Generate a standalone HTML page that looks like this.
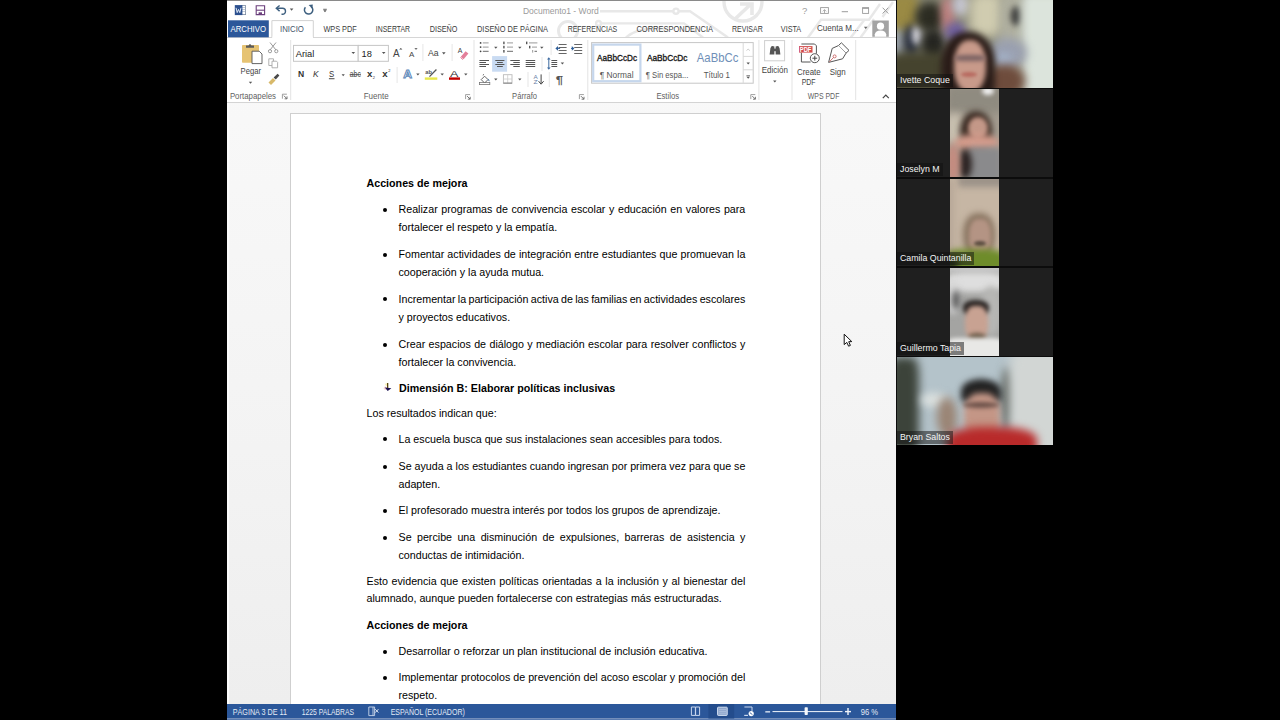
<!DOCTYPE html>
<html><head><meta charset="utf-8">
<style>
*{margin:0;padding:0;box-sizing:border-box}
html,body{width:1280px;height:720px;overflow:hidden;background:#000}
body{position:relative;font-family:"Liberation Sans",sans-serif}
.a{position:absolute}
.l{position:absolute;font-size:10.7px;line-height:14px;white-space:nowrap;color:#000}
.b{font-weight:bold}
.jf{display:flex;justify-content:space-between}
.dot{position:absolute;width:4px;height:4px;border-radius:50%;background:#000}
.lbl{position:absolute;color:#f4f4f4;font-size:8.8px;line-height:13px;height:13px;white-space:nowrap;padding:0 3px 0 3px;background:rgba(16,16,16,.5)}
</style></head>
<body>
<div class="a" style="left:227px;top:0;width:669px;height:720px;background:linear-gradient(#fafafa 0px,#f8f8f8 120px,#f3f3f3 450px,#eeeeee 704px)"></div>
<div class="a" style="left:227px;top:103px;width:1.5px;height:601px;background:#fcfcfc"></div>
<div class="a" style="left:227px;top:0;width:669px;height:37px;background:#fff"></div>
<div class="a" style="left:227px;top:0;width:669px;height:1px;background:#8a8a8a"></div>
<div class="a" style="left:227px;top:37px;width:669px;height:66px;background:#fff;border-bottom:1px solid #d4d4d4"></div>
<div class="a" style="left:290px;top:113px;width:531px;height:600px;background:#fff;border:1px solid #cfcfcf"></div>
<svg class="a" style="left:0;top:700px" width="1280" height="20" viewBox="0 700 1280 20" font-family="Liberation Sans, sans-serif">
<rect x="227" y="704" width="669" height="14.5" fill="#2b579a"/><rect x="227" y="718.5" width="669" height="1.5" fill="#5a7bb0"/>
<text x="232.7" y="714.6" font-size="8.4" fill="#e4ebf5" textLength="54.3" lengthAdjust="spacingAndGlyphs">PÁGINA 3 DE 11</text>
<text x="301.8" y="714.6" font-size="8.4" fill="#e4ebf5" textLength="52.2" lengthAdjust="spacingAndGlyphs">1225 PALABRAS</text>
<path d="M368.8 707 H373 V715.6 H368.8 Z M373 707 H374.6 V715.6 H373" fill="none" stroke="#c8d6ea" stroke-width=".9"/><path d="M375.2 709.2 L378.4 712.6 M378.4 709.2 L375.2 712.6" stroke="#e0e8f4" stroke-width="1"/>
<text x="390.7" y="714.6" font-size="8.4" fill="#e4ebf5" textLength="74.1" lengthAdjust="spacingAndGlyphs">ESPAÑOL (ECUADOR)</text>
<rect x="708.4" y="704" width="25.8" height="14.5" fill="#234c8c"/>
<path d="M691.4 707 H695.4 V715.4 H691.4 Z M695.6 707 H699.6 V715.4 H695.6 Z" fill="none" stroke="#c9d7ee" stroke-width="1"/>
<rect x="717.6" y="707.2" width="9.6" height="8.2" rx=".6" fill="#8ea6cc" stroke="#d4e0f2" stroke-width="1"/><path d="M719 709.6H726M719 711.4H726M719 713.2H726" stroke="#b8c8e2" stroke-width=".7"/>
<path d="M744.4 707 H752 V711 M748 715.4 H744.4 Z" fill="none" stroke="#c9d7ee" stroke-width="1"/><circle cx="751.2" cy="713.6" r="2.6" fill="#fff"/><path d="M749.8 712.6 L752.4 714.6" stroke="#2b579a" stroke-width=".9"/>
<rect x="765.3" y="711.2" width="4.8" height="1.3" fill="#e8eef8"/>
<rect x="772.5" y="711" width="70" height="1.1" fill="#dfe7f3"/>
<rect x="804.6" y="707.3" width="3.2" height="7.8" rx=".8" fill="#f4f7fb"/>
<rect x="845" y="710.9" width="6" height="1.4" fill="#f0f4fa"/><rect x="847.3" y="708" width="1.4" height="7" fill="#f0f4fa"/>
<text x="860.7" y="714.6" font-size="8.8" fill="#e4ebf5" textLength="17.3" lengthAdjust="spacingAndGlyphs">96 %</text>
</svg>
<svg class="a" style="left:0;top:0" width="1280" height="110" viewBox="0 0 1280 110" font-family="Liberation Sans, sans-serif">
<clipPath id="tb"><rect x="227" y="1" width="669" height="36"/></clipPath>
<g fill="none" stroke="#e8e8e8" stroke-width="2.4" clip-path="url(#tb)"><path d="M600 11.2H673.4"/><circle cx="676" cy="11.2" r="2.6"/><path d="M678.6 11.2H690 L728 37.5"/><path d="M601 23.4H684 L703 37.5"/><circle cx="598.5" cy="23.4" r="2.4"/><path d="M626 37.5 Q636 29 650 29 H668"/><circle cx="743" cy="2" r="19" stroke-width="3.4"/><path d="M735 19 L751 4 M740 4 H752 V15" stroke-width="3.6"/><circle cx="568" cy="31" r="9.5" stroke-width="3"/><path d="M808 37.5 L821 19.7 H869 L880 4 M850.8 37.5 L865 19 M860.6 37.5 L874 19 M882.5 17 L893 2"/></g>
<text x="522.9" y="14.3" font-size="9" fill="#9a9a9a" textLength="75.8" lengthAdjust="spacingAndGlyphs" >Documento1 - Word</text>
<rect x="241" y="5.6" width="4.6" height="9" fill="#fff" stroke="#7a8aa0" stroke-width=".8"/><path d="M242 7.5h3M242 9.5h3M242 11.5h3" stroke="#9ab" stroke-width=".6"/><rect x="234.8" y="5.1" width="7.6" height="10" fill="#2b4f8e"/><path d="M236 7.8 L237.2 12.6 L238.5 9.4 L239.8 12.6 L241 7.8" fill="none" stroke="#dfe8f5" stroke-width="1"/>
<path d="M256.2 5.8H264.6V14.6H256.2Z" fill="#fff" stroke="#6b3f7c" stroke-width="1.1"/><path d="M256.2 10.2H264.6" stroke="#6b3f7c" stroke-width="1.1"/><path d="M258.6 14.6V12.3H262V14.6" fill="#6b3f7c"/>
<path d="M277 8.3 H282.5 A3 3 0 0 1 282.5 14.3 H281.5" fill="none" stroke="#3d5f7f" stroke-width="1.4"/><path d="M279.6 5.5 L276.3 8.3 L279.6 11.1" fill="none" stroke="#3d5f7f" stroke-width="1.4"/>
<path d="M289.80 8.50h3.6l-1.80 2.2z" fill="#555"/>
<path d="M305.4 7.2 A4.2 4.2 0 1 0 311.2 6.6" fill="none" stroke="#3d5f7f" stroke-width="1.5"/><path d="M308.6 5 L312.8 4.6 L312.4 8.8 Z" fill="#3d5f7f"/>
<rect x="323.2" y="8.8" width="3.6" height=".9" fill="#555"/><path d="M323.30 10.20h3.4l-1.70 2z" fill="#555"/>
<text x="802" y="13.8" font-size="9.5" fill="#9c9c9c" >?</text>
<rect x="820.6" y="7.6" width="7.8" height="5.8" fill="none" stroke="#9c9c9c" stroke-width=".9"/><path d="M822.8 11.4 L824.5 9.6 L826.2 11.4 M824.5 9.8V13" fill="none" stroke="#9c9c9c" stroke-width=".8"/>
<rect x="841.7" y="11.2" width="6.3" height="1" fill="#9c9c9c"/>
<rect x="862.6" y="7.8" width="6" height="5.6" fill="none" stroke="#9c9c9c" stroke-width=".9"/><rect x="862.2" y="7.4" width="6.8" height="1.4" fill="#9c9c9c"/>
<path d="M882.6 7.7 L888.3 13.5 M888.3 7.7 L882.6 13.5" stroke="#9c9c9c" stroke-width="1"/>
<rect x="227" y="37" width="669" height="1" fill="#d6d6d6"/>
<rect x="228" y="20.3" width="40.8" height="17" fill="#2b579a"/>
<text x="230.5" y="32" font-size="8.7" fill="#fff" textLength="35.5" lengthAdjust="spacingAndGlyphs" >ARCHIVO</text>
<path d="M271.9 38 V20.6 H313.3 V38" fill="#fff" stroke="#d2d2d2" stroke-width="1"/><rect x="272.4" y="36.5" width="40.4" height="3" fill="#fff"/>
<text x="280" y="32" font-size="8.7" fill="#44546a" textLength="23.9" lengthAdjust="spacingAndGlyphs" >INICIO</text>
<text x="323.4" y="32" font-size="8.7" fill="#3c3c3c" textLength="33.3" lengthAdjust="spacingAndGlyphs" >WPS PDF</text>
<text x="375.8" y="32" font-size="8.7" fill="#3c3c3c" textLength="34.2" lengthAdjust="spacingAndGlyphs" >INSERTAR</text>
<text x="429.7" y="32" font-size="8.7" fill="#3c3c3c" textLength="27.8" lengthAdjust="spacingAndGlyphs" >DISEÑO</text>
<text x="477" y="32" font-size="8.7" fill="#3c3c3c" textLength="71" lengthAdjust="spacingAndGlyphs" >DISEÑO DE PÁGINA</text>
<text x="567.7" y="32" font-size="8.7" fill="#3c3c3c" textLength="49.5" lengthAdjust="spacingAndGlyphs" >REFERENCIAS</text>
<text x="636.4" y="32" font-size="8.7" fill="#3c3c3c" textLength="76.6" lengthAdjust="spacingAndGlyphs" >CORRESPONDENCIA</text>
<text x="732" y="32" font-size="8.7" fill="#3c3c3c" textLength="30.7" lengthAdjust="spacingAndGlyphs" >REVISAR</text>
<text x="780.8" y="32" font-size="8.7" fill="#3c3c3c" textLength="20.4" lengthAdjust="spacingAndGlyphs" >VISTA</text>
<text x="817" y="31.4" font-size="9.2" fill="#444" textLength="41.7" lengthAdjust="spacingAndGlyphs" >Cuenta M...</text>
<path d="M863.90 26.70h3.6l-1.80 2.2z" fill="#666"/>
<rect x="872.3" y="20.5" width="16.5" height="16.3" fill="#a3a3a3"/><circle cx="880.5" cy="26.2" r="3.6" fill="#fff"/><path d="M874.8 36.8 V34.2 Q875.5 30.6 880.5 30.4 Q885.5 30.6 886.2 34.2 V36.8 Z" fill="#fff"/>
<rect x="290.2" y="40" width="1" height="60" fill="#e3e3e3"/>
<rect x="473.5" y="40" width="1" height="60" fill="#e3e3e3"/>
<rect x="587.3" y="40" width="1" height="60" fill="#e3e3e3"/>
<rect x="758.4" y="40" width="1" height="60" fill="#e3e3e3"/>
<rect x="791.5" y="40" width="1" height="60" fill="#e3e3e3"/>
<rect x="855.2" y="40" width="1" height="60" fill="#e3e3e3"/>
<text x="229.9" y="98.8" font-size="8.7" fill="#5f5f5f" textLength="46.1" lengthAdjust="spacingAndGlyphs" >Portapapeles</text>
<text x="363.7" y="98.8" font-size="8.7" fill="#5f5f5f" textLength="24.9" lengthAdjust="spacingAndGlyphs" >Fuente</text>
<text x="512.1" y="98.8" font-size="8.7" fill="#5f5f5f" textLength="24.9" lengthAdjust="spacingAndGlyphs" >Párrafo</text>
<text x="656.4" y="98.8" font-size="8.7" fill="#5f5f5f" textLength="22.6" lengthAdjust="spacingAndGlyphs" >Estilos</text>
<text x="807.7" y="98.8" font-size="8.7" fill="#5f5f5f" textLength="31.7" lengthAdjust="spacingAndGlyphs" >WPS PDF</text>
<path d="M282.4 98.7V94.2h4.5" fill="none" stroke="#888" stroke-width=".8"/><path d="M283.9 95.7l3 3M287.0 96.4v2.4h-2.4" fill="none" stroke="#666" stroke-width=".9"/>
<path d="M465.6 99.1V94.6h4.5" fill="none" stroke="#888" stroke-width=".8"/><path d="M467.1 96.1l3 3M470.20000000000005 96.8v2.4h-2.4" fill="none" stroke="#666" stroke-width=".9"/>
<path d="M579.4 99.1V94.6h4.5" fill="none" stroke="#888" stroke-width=".8"/><path d="M580.9 96.1l3 3M584.0 96.8v2.4h-2.4" fill="none" stroke="#666" stroke-width=".9"/>
<path d="M750.8 99.1V94.6h4.5" fill="none" stroke="#888" stroke-width=".8"/><path d="M752.3 96.1l3 3M755.4 96.8v2.4h-2.4" fill="none" stroke="#666" stroke-width=".9"/>
<path d="M882.8 98.2 L885.8 95.2 L888.8 98.2" fill="none" stroke="#444" stroke-width="1.2"/>
<rect x="242" y="45" width="17" height="17.8" rx=".8" fill="#e6c373"/><path d="M246 47.8 V45.6 H248.6 Q250 42.6 251.4 45.6 H254 V47.8 Z" fill="#5a5a5a"/><path d="M252 51.2 H259.2 L262 54 V63.6 H252 Z" fill="#fff" stroke="#555" stroke-width=".9"/>
<text x="240.6" y="74.4" font-size="9" fill="#444" textLength="20.4" lengthAdjust="spacingAndGlyphs" >Pegar</text>
<path d="M248.80 81.70h3.4l-1.70 2z" fill="#555"/>
<g fill="none" stroke="#9a9a9a" stroke-width="1"><path d="M270 42.5 L276 50 M276 42.5 L270 50"/><circle cx="270" cy="51.2" r="1.6"/><circle cx="276.3" cy="51.2" r="1.6"/></g>
<g fill="#fff" stroke="#a8a8a8" stroke-width=".9"><path d="M268.8 58.8 H273.5 V65.5 H268.8 Z"/><path d="M272 61.2 H276.5 L277.6 62.3 V67.8 H272 Z"/></g>
<path d="M268.5 82.5 L273 78 L275.5 80.5 L271 85 Z" fill="#d8b96a"/><path d="M273.6 77.6 L277.6 73.8 L279.4 75.6 L275.8 79.6 Z" fill="#4a4a4a"/>
<rect x="293.5" y="45.4" width="64.7" height="15.9" fill="#fff" stroke="#c6c6c6" stroke-width="1"/><rect x="358.2" y="45.4" width="30.2" height="15.9" fill="#fff" stroke="#c6c6c6" stroke-width="1"/>
<text x="295.7" y="56.6" font-size="9.3" fill="#222" >Arial</text>
<path d="M351.50 51.90h3.6l-1.80 2.2z" fill="#555"/>
<text x="361.5" y="56.6" font-size="9.3" fill="#222" >18</text>
<path d="M381.90 51.90h3.6l-1.80 2.2z" fill="#555"/>
<text x="393.1" y="57" font-size="10" fill="#444" textLength="6.6" lengthAdjust="spacingAndGlyphs" >A</text>
<path d="M399.2 49.6 L400.8 48 L402.4 49.6 Z" fill="#444"/>
<text x="409" y="57" font-size="8" fill="#444" textLength="5.3" lengthAdjust="spacingAndGlyphs" >A</text>
<path d="M414.4 48.2 H417.6 L416 49.8 Z" fill="#444"/>
<rect x="422.4" y="44" width="1" height="17" fill="#e6e6e6"/>
<text x="428.1" y="56.3" font-size="9.5" fill="#444" textLength="10.6" lengthAdjust="spacingAndGlyphs" >Aa</text>
<path d="M442.00 52.20h3.6l-1.80 2.2z" fill="#555"/>
<rect x="451.6" y="44" width="1" height="17" fill="#e6e6e6"/>
<text x="457.8" y="53.2" font-size="6.5" fill="#444" textLength="4.6" lengthAdjust="spacingAndGlyphs" >A</text>
<path d="M460.8 56.8 L465.6 51.2 L468.4 53.6 L463.6 59.2 Z" fill="#e37f9a"/><path d="M460.4 57.4 L462.9 59.6" stroke="#e37f9a" stroke-width="1"/>
<text x="297.9" y="77.4" font-size="8.4" fill="#333" textLength="6.2" lengthAdjust="spacingAndGlyphs" font-weight="bold">N</text>
<text x="312.9" y="77.4" font-size="8.4" fill="#333" textLength="5.6" lengthAdjust="spacingAndGlyphs" font-style="italic">K</text>
<text x="329.1" y="77.4" font-size="8.4" fill="#333" textLength="5.2" lengthAdjust="spacingAndGlyphs" >S</text>
<rect x="328.9" y="78.3" width="5.6" height=".9" fill="#333"/>
<path d="M341.60 74.20h3.2l-1.60 2z" fill="#555"/>
<text x="349.8" y="77.4" font-size="8.4" fill="#444" textLength="11" lengthAdjust="spacingAndGlyphs" >abc</text>
<rect x="349.6" y="74.3" width="11.4" height=".8" fill="#444"/>
<text x="367" y="77.4" font-size="9" fill="#333" textLength="5.4" lengthAdjust="spacingAndGlyphs" font-weight="bold">x</text>
<text x="372.8" y="79.2" font-size="4.4" fill="#333" textLength="2.2" lengthAdjust="spacingAndGlyphs" >2</text>
<text x="382.2" y="77.4" font-size="9" fill="#333" textLength="5.4" lengthAdjust="spacingAndGlyphs" font-weight="bold">x</text>
<text x="388.2" y="72.4" font-size="4.4" fill="#333" textLength="2.2" lengthAdjust="spacingAndGlyphs" >2</text>
<rect x="396.6" y="67" width="1" height="16" fill="#e6e6e6"/>
<text x="403.2" y="78.4" font-size="11.5" fill="#fff" textLength="8.8" lengthAdjust="spacingAndGlyphs" stroke="#5a86b8" stroke-width=".9" font-weight="bold">A</text>
<path d="M416.20 73.60h3.4l-1.70 2z" fill="#555"/>
<text x="425.2" y="74" font-size="6" fill="#555" textLength="6.8" lengthAdjust="spacingAndGlyphs" font-weight="bold">ab</text>
<path d="M429.5 76.6 L436.4 69.5" stroke="#555" stroke-width="1.3"/>
<rect x="424.8" y="77.4" width="12.5" height="2.4" fill="#e8e84a"/>
<path d="M440.50 73.60h3.4l-1.70 2z" fill="#555"/>
<text x="449.9" y="76.8" font-size="9.4" fill="#333" textLength="8.4" lengthAdjust="spacingAndGlyphs" >A</text>
<rect x="449" y="77.4" width="11" height="2.4" fill="#c40000"/>
<path d="M464.10 73.60h3.4l-1.70 2z" fill="#555"/>
<circle cx="480.6" cy="42.9" r=".9" fill="#444"/><rect x="482.8" y="42.4" width="5.8" height="1" fill="#9a9a9a"/>
<circle cx="480.6" cy="47.1" r=".9" fill="#444"/><rect x="482.8" y="46.6" width="5.8" height="1" fill="#9a9a9a"/>
<circle cx="480.6" cy="51.3" r=".9" fill="#444"/><rect x="482.8" y="50.8" width="5.8" height="1" fill="#6a6a6a"/>
<path d="M494.10 46.80h3.4l-1.70 2z" fill="#555"/>
<rect x="503.2" y="41.6" width="1.4" height="2.6" fill="#555"/><rect x="507" y="42.4" width="6" height="1" fill="#9a9a9a"/>
<rect x="503.2" y="45.800000000000004" width="1.4" height="2.6" fill="#555"/><rect x="507" y="46.6" width="6" height="1" fill="#9a9a9a"/>
<rect x="503.2" y="50.0" width="1.4" height="2.6" fill="#555"/><rect x="507" y="50.8" width="6" height="1" fill="#6a6a6a"/>
<path d="M518.10 46.80h3.4l-1.70 2z" fill="#555"/>
<rect x="526" y="41.6" width="1.4" height="2.6" fill="#555"/><rect x="529" y="42.4" width="8.4" height="1" fill="#9a9a9a"/><rect x="529" y="45.8" width="1.4" height="2.6" fill="#555"/><rect x="532" y="46.6" width="5" height="1" fill="#9a9a9a"/><rect x="532" y="50" width="1.2" height="2.6" fill="#aaa"/><rect x="534.5" y="50.8" width="2.5" height="1" fill="#6a6a6a"/>
<path d="M540.10 46.80h3.4l-1.70 2z" fill="#555"/>
<rect x="550.6" y="40" width="1" height="15" fill="#e6e6e6"/>
<rect x="558.6" y="44.05" width="8" height=".9" fill="#555"/>
<rect x="558.6" y="47.05" width="8" height=".9" fill="#555"/>
<rect x="558.6" y="50.05" width="8" height=".9" fill="#555"/>
<rect x="558.6" y="53.05" width="8" height=".9" fill="#555"/>
<path d="M555.4 48.4 L558.0 46 V50.8Z" fill="#2f5f9a"/><rect x="556.9" y="47.9" width="3.2" height="1" fill="#2f5f9a"/>
<rect x="574.2" y="44.05" width="8" height=".9" fill="#555"/>
<rect x="574.2" y="47.05" width="8" height=".9" fill="#555"/>
<rect x="574.2" y="50.05" width="8" height=".9" fill="#555"/>
<rect x="574.2" y="53.05" width="8" height=".9" fill="#555"/>
<path d="M574.4 48.4 L571.8 46 V50.8Z" fill="#2f5f9a"/><rect x="571" y="47.9" width="2" height="1" fill="#2f5f9a"/>
<rect x="492.1" y="56.1" width="15" height="15.6" fill="#c9dbf2"/>
<rect x="479.4" y="60.00" width="9.6" height="1" fill="#555"/><rect x="479.4" y="62.00" width="6.6" height="1" fill="#555"/><rect x="479.4" y="64.00" width="9.6" height="1" fill="#555"/><rect x="479.4" y="66.00" width="6.6" height="1" fill="#555"/>
<rect x="495.3" y="60.00" width="9.1" height="1" fill="#555"/><rect x="497.0" y="62.00" width="5.8" height="1" fill="#555"/><rect x="495.3" y="64.00" width="9.1" height="1" fill="#555"/><rect x="497.0" y="66.00" width="5.8" height="1" fill="#555"/>
<rect x="510.3" y="60.00" width="9.5" height="1" fill="#555"/><rect x="513.3" y="62.00" width="6.5" height="1" fill="#555"/><rect x="510.3" y="64.00" width="9.5" height="1" fill="#555"/><rect x="513.3" y="66.00" width="6.5" height="1" fill="#555"/>
<rect x="525.7" y="60.00" width="9.5" height="1" fill="#555"/><rect x="525.7" y="62.00" width="9.5" height="1" fill="#555"/><rect x="525.7" y="64.00" width="9.5" height="1" fill="#555"/><rect x="525.7" y="66.00" width="9.5" height="1" fill="#555"/>
<rect x="541.5" y="57" width="1" height="14" fill="#e6e6e6"/>
<path d="M548.8 57.2 L550.6 59.4 H547 Z M548.8 69.8 L550.6 67.6 H547 Z" fill="#3d6aa0"/><rect x="548.3" y="59" width="1" height="9" fill="#3d6aa0"/>
<rect x="551.4" y="60.00" width="5.8" height="1" fill="#555"/><rect x="551.4" y="62.00" width="5.8" height="1" fill="#555"/><rect x="551.4" y="64.00" width="5.8" height="1" fill="#555"/><rect x="551.4" y="66.00" width="5.8" height="1" fill="#555"/>
<path d="M560.70 62.40h3.4l-1.70 2z" fill="#555"/>
<rect x="479.4" y="82.4" width="10.4" height="2.2" fill="#fff" stroke="#777" stroke-width=".8"/><path d="M481.2 79.6 L484.6 76.2 L488 79.6 L484.6 83 Z" fill="#fff" stroke="#555" stroke-width=".9"/><path d="M482.8 75.2 L484 74.4" stroke="#555" stroke-width=".9"/><path d="M487.6 78.4 Q490 79.6 489.6 81.6 Q488 80.8 487.6 78.4Z" fill="#3a6a9a"/>
<path d="M494.10 78.40h3.4l-1.70 2z" fill="#555"/>
<rect x="503.4" y="74.7" width="8.6" height="8.6" fill="none" stroke="#bbb" stroke-width=".9"/><path d="M507.7 74.7V83.3M503.4 79H512" stroke="#ccc" stroke-width=".8"/><rect x="503.4" y="82.6" width="8.6" height=".9" fill="#777"/>
<path d="M518.10 78.40h3.4l-1.70 2z" fill="#555"/>
<rect x="527.5" y="72" width="1" height="15" fill="#e6e6e6"/>
<text x="533.6" y="78.6" font-size="5.6" fill="#6a7fa8" textLength="4.2" lengthAdjust="spacingAndGlyphs" >A</text>
<text x="533.6" y="84" font-size="5.6" fill="#6a7fa8" textLength="4.2" lengthAdjust="spacingAndGlyphs" >Z</text>
<rect x="540.6" y="74.4" width="1" height="8.6" fill="#444"/><path d="M538.6 81.2 L541.1 84.2 L543.6 81.2" fill="none" stroke="#444" stroke-width="1"/>
<rect x="548.8" y="72" width="1" height="15" fill="#e6e6e6"/>
<text x="555.8" y="83.6" font-size="10.5" fill="#555" textLength="7.4" lengthAdjust="spacingAndGlyphs" font-weight="bold">¶</text>
<rect x="591.6" y="42.6" width="161.6" height="40.6" fill="#fff" stroke="#c6c6c6" stroke-width="1"/>
<rect x="593.2" y="44.6" width="47.2" height="36.6" fill="#fff" stroke="#c5d6ec" stroke-width="2.2"/>
<path d="M743.2 42.6 V83.2 M743.2 56.4 H753.2 M743.2 69.8 H753.2" stroke="#d8d8d8" stroke-width="1"/>
<path d="M746.6 50.6 L748.2 49 L749.8 50.6" fill="none" stroke="#bbb" stroke-width=".8"/>
<path d="M746.50 62.40h3.4l-1.70 2z" fill="#555"/>
<rect x="746.4" y="75.4" width="3.6" height=".8" fill="#555"/><path d="M746.50 76.80h3.4l-1.70 2z" fill="#555"/>
<text x="597" y="61" font-size="9.3" fill="#1a1a1a" textLength="40" lengthAdjust="spacingAndGlyphs" stroke="#1a1a1a" stroke-width=".35">AaBbCcDc</text>
<text x="599.8" y="77.5" font-size="8.6" fill="#555" textLength="33.7" lengthAdjust="spacingAndGlyphs" >¶ Normal</text>
<text x="646.9" y="61" font-size="9.3" fill="#1a1a1a" textLength="40.5" lengthAdjust="spacingAndGlyphs" stroke="#1a1a1a" stroke-width=".35">AaBbCcDc</text>
<text x="645.8" y="77.5" font-size="8.6" fill="#555" textLength="42.6" lengthAdjust="spacingAndGlyphs" >¶ Sin espa...</text>
<text x="696.8" y="62" font-size="12.6" fill="#6f8fb8" textLength="41.5" lengthAdjust="spacingAndGlyphs" >AaBbCc</text>
<text x="703.8" y="77.5" font-size="8.6" fill="#555" textLength="26.1" lengthAdjust="spacingAndGlyphs" >Título 1</text>
<rect x="764.6" y="40.6" width="20" height="20.2" fill="#fff" stroke="#cfcfcf" stroke-width="1"/>
<g fill="#555"><path d="M769.6 54.6 L770.4 48.4 Q771 46 772.4 46 L774.4 46.4 V54.6 Z"/><path d="M780.4 54.6 L779.6 48.4 Q779 46 777.6 46 L775.6 46.4 V54.6 Z"/></g><rect x="773.6" y="48.6" width="2.8" height="2.6" fill="#555"/>
<text x="761.8" y="72.8" font-size="9" fill="#444" textLength="26.2" lengthAdjust="spacingAndGlyphs" >Edición</text>
<path d="M773.10 80.40h3.4l-1.70 2z" fill="#555"/>
<path d="M801.4 44 H814.6 L816.4 45.8 V53.6 M810.6 62 H801.4 V52.6" fill="none" stroke="#555" stroke-width="1"/>
<rect x="799" y="46.1" width="13.5" height="6.5" fill="#d24d4d"/>
<text x="799.8" y="51.8" font-size="6.4" fill="#fff" textLength="11.6" lengthAdjust="spacingAndGlyphs" font-weight="bold">PDF</text>
<circle cx="814.8" cy="58.2" r="4.5" fill="#fff" stroke="#555" stroke-width="1"/><path d="M812.4 58.2 H817.2 M814.8 55.8 V60.6" stroke="#444" stroke-width="1"/>
<text x="797" y="74.5" font-size="9" fill="#444" textLength="23.7" lengthAdjust="spacingAndGlyphs" >Create</text>
<text x="801.7" y="85.3" font-size="9" fill="#444" textLength="13.9" lengthAdjust="spacingAndGlyphs" >PDF</text>
<path d="M838.4 45.6 L841.4 42.8 L849 50.4 L846 53.2 Z" fill="#fff" stroke="#555" stroke-width="1"/><path d="M838.4 45.6 L832.2 48.4 L828.6 62.4 L842.6 58.8 L846 53.2" fill="#fff" stroke="#555" stroke-width="1"/><path d="M829.4 61.8 L833.6 57.4" stroke="#c86464" stroke-width=".9"/><circle cx="834.6" cy="56.4" r="1.5" fill="none" stroke="#c86464" stroke-width=".9"/>
<text x="829.7" y="74.5" font-size="9" fill="#444" textLength="15.9" lengthAdjust="spacingAndGlyphs" >Sign</text>
</svg>
<div id="doc">
<div class="l b" style="left:366.5px;top:175.99px">Acciones de mejora</div>
<div class="l jf" style="left:398.5px;top:202.29px;width:346.9px"><span>Realizar</span><span>programas</span><span>de</span><span>convivencia</span><span>escolar</span><span>y</span><span>educación</span><span>en</span><span>valores</span><span>para</span></div>
<div class="dot" style="left:383.3px;top:208.0px"></div>
<div class="l" style="left:398.5px;top:219.89px">fortalecer el respeto y la empatía.</div>
<div class="l jf" style="left:398.5px;top:247.09px;width:346.9px"><span>Fomentar</span><span>actividades</span><span>de</span><span>integración</span><span>entre</span><span>estudiantes</span><span>que</span><span>promuevan</span><span>la</span></div>
<div class="dot" style="left:383.3px;top:252.8px"></div>
<div class="l" style="left:398.5px;top:264.79px">cooperación y la ayuda mutua.</div>
<div class="l jf" style="left:398.5px;top:291.59px;width:346.9px"><span>Incrementar</span><span>la</span><span>participación</span><span>activa</span><span>de</span><span>las</span><span>familias</span><span>en</span><span>actividades</span><span>escolares</span></div>
<div class="dot" style="left:383.3px;top:297.3px"></div>
<div class="l" style="left:398.5px;top:310.29px">y proyectos educativos.</div>
<div class="l jf" style="left:398.5px;top:337.49px;width:346.9px"><span>Crear</span><span>espacios</span><span>de</span><span>diálogo</span><span>y</span><span>mediación</span><span>escolar</span><span>para</span><span>resolver</span><span>conflictos</span><span>y</span></div>
<div class="dot" style="left:383.3px;top:343.2px"></div>
<div class="l" style="left:398.5px;top:355.29px">fortalecer la convivencia.</div>
<div class="l b" style="left:399.0px;top:380.89px">Dimensión B: Elaborar políticas inclusivas</div>
<div class="l" style="left:366.5px;top:406.39px">Los resultados indican que:</div>
<div class="l" style="left:398.5px;top:431.69px">La escuela busca que sus instalaciones sean accesibles para todos.</div>
<div class="dot" style="left:383.3px;top:437.4px"></div>
<div class="l jf" style="left:398.5px;top:459.29px;width:346.9px"><span>Se</span><span>ayuda</span><span>a</span><span>los</span><span>estudiantes</span><span>cuando</span><span>ingresan</span><span>por</span><span>primera</span><span>vez</span><span>para</span><span>que</span><span>se</span></div>
<div class="dot" style="left:383.3px;top:465.0px"></div>
<div class="l" style="left:398.5px;top:477.09px">adapten.</div>
<div class="l" style="left:398.5px;top:502.89px">El profesorado muestra interés por todos los grupos de aprendizaje.</div>
<div class="dot" style="left:383.3px;top:508.6px"></div>
<div class="l jf" style="left:398.5px;top:530.39px;width:346.9px"><span>Se</span><span>percibe</span><span>una</span><span>disminución</span><span>de</span><span>expulsiones,</span><span>barreras</span><span>de</span><span>asistencia</span><span>y</span></div>
<div class="dot" style="left:383.3px;top:536.1px"></div>
<div class="l" style="left:398.5px;top:547.79px">conductas de intimidación.</div>
<div class="l jf" style="left:366.5px;top:573.69px;width:378.9px"><span>Esto</span><span>evidencia</span><span>que</span><span>existen</span><span>políticas</span><span>orientadas</span><span>a</span><span>la</span><span>inclusión</span><span>y</span><span>al</span><span>bienestar</span><span>del</span></div>
<div class="l" style="left:366.5px;top:591.19px">alumnado, aunque pueden fortalecerse con estrategias más estructuradas.</div>
<div class="l b" style="left:366.5px;top:617.69px">Acciones de mejora</div>
<div class="l" style="left:398.5px;top:644.39px">Desarrollar o reforzar un plan institucional de inclusión educativa.</div>
<div class="dot" style="left:383.3px;top:650.1px"></div>
<div class="l jf" style="left:398.5px;top:669.99px;width:346.9px"><span>Implementar</span><span>protocolos</span><span>de</span><span>prevención</span><span>del</span><span>acoso</span><span>escolar</span><span>y</span><span>promoción</span><span>del</span></div>
<div class="dot" style="left:383.3px;top:675.7px"></div>
<div class="l" style="left:398.5px;top:688.19px">respeto.</div>
<svg class="a" style="left:383px;top:382px" width="10" height="10" viewBox="0 0 10 10">
<circle cx="2.4" cy="6.2" r="1.6" fill="#f0a0a0" opacity=".45"/>
<circle cx="3.6" cy="2.6" r="1.4" fill="#f4e070" opacity=".5"/>
<rect x="4" y="1" width="1.3" height="5" fill="#5a4a10"/>
<path d="M1.8 5.6 L4.7 9 L8.4 6.2 Z" fill="#1a1050"/>
</svg>
</div>
<div class="a" style="left:896px;top:0;width:157px;height:445px;background:#0c0c0c"></div>
<div class="a" style="left:897px;top:0px;width:156px;height:88px;background:#8a8a78;overflow:hidden"><div class="a" style="left:-8px;top:-8px;width:30px;height:42px;background:#9a8a44;border-radius:30%;filter:blur(5px);opacity:1"></div><div class="a" style="left:-8px;top:30px;width:16px;height:30px;background:#a0a8b0;border-radius:30%;filter:blur(4px);opacity:1"></div><div class="a" style="left:6px;top:24px;width:16px;height:34px;background:#2a3040;border-radius:50%;filter:blur(4px);opacity:1"></div><div class="a" style="left:15px;top:25px;width:11px;height:20px;background:#d8d8e0;border-radius:50%;filter:blur(3px);opacity:1"></div><div class="a" style="left:18px;top:2px;width:30px;height:30px;background:#2c2c22;border-radius:50%;filter:blur(5px);opacity:1"></div><div class="a" style="left:24px;top:28px;width:24px;height:34px;background:#242420;border-radius:50%;filter:blur(5px);opacity:1"></div><div class="a" style="left:-8px;top:52px;width:60px;height:40px;background:#45432e;border-radius:20%;filter:blur(5px);opacity:1"></div><div class="a" style="left:44px;top:-4px;width:14px;height:36px;background:#c08080;border-radius:50%;filter:blur(4px);opacity:1"></div><div class="a" style="left:48px;top:22px;width:22px;height:20px;background:#7060a0;border-radius:50%;filter:blur(4px);opacity:1"></div><div class="a" style="left:55px;top:-6px;width:18px;height:22px;background:#c4c4d0;border-radius:50%;filter:blur(4px);opacity:1"></div><div class="a" style="left:72px;top:-8px;width:36px;height:45px;background:#d0ccb0;border-radius:30%;filter:blur(6px);opacity:1"></div><div class="a" style="left:102px;top:-8px;width:24px;height:100px;background:#b0b0a0;border-radius:20%;filter:blur(5px);opacity:1"></div><div class="a" style="left:114px;top:6px;width:11px;height:20px;background:#303030;border-radius:50%;filter:blur(3px);opacity:1"></div><div class="a" style="left:124px;top:-8px;width:45px;height:110px;background:#dce4dc;border-radius:10%;filter:blur(5px);opacity:1"></div><div class="a" style="left:92px;top:38px;width:38px;height:30px;background:#9aa0b0;border-radius:50%;filter:blur(5px);opacity:1"></div><div class="a" style="left:98px;top:54px;width:18px;height:16px;background:#a8b8d0;border-radius:50%;filter:blur(4px);opacity:1"></div><div class="a" style="left:88px;top:64px;width:40px;height:34px;background:#6e4c3c;border-radius:50%;filter:blur(5px);opacity:1"></div><div class="a" style="left:44px;top:32px;width:54px;height:70px;background:#2a1c18;border-radius:45% 45% 20% 20%;filter:blur(3px);opacity:1"></div><div class="a" style="left:57px;top:40px;width:32px;height:52px;background:#c89a8a;border-radius:45%;filter:blur(2.5px);opacity:1"></div><div class="a" style="left:58px;top:55px;width:30px;height:6px;background:#7a6262;border-radius:30%;filter:blur(2px);opacity:1"></div><div class="a" style="left:64px;top:72px;width:16px;height:5px;background:#b86a60;border-radius:50%;filter:blur(1.5px);opacity:1"></div></div>
<div class="a" style="left:897px;top:89px;width:156px;height:88px;background:#1f1f1f"></div>
<div class="a" style="left:950px;top:89px;width:49px;height:88px;background:#a49c90;overflow:hidden"><div class="a" style="left:-5px;top:-5px;width:60px;height:30px;background:#8f8b80;border-radius:20%;filter:blur(5px);opacity:1"></div><div class="a" style="left:32px;top:-2px;width:12px;height:8px;background:#f0f0f0;border-radius:50%;filter:blur(2px);opacity:1"></div><div class="a" style="left:-5px;top:25px;width:20px;height:30px;background:#c8c0b0;border-radius:20%;filter:blur(4px);opacity:1"></div><div class="a" style="left:10px;top:22px;width:32px;height:40px;background:#3a2a22;border-radius:50%;filter:blur(3px);opacity:1"></div><div class="a" style="left:18px;top:28px;width:20px;height:22px;background:#c49888;border-radius:50%;filter:blur(2px);opacity:1"></div><div class="a" style="left:4px;top:45px;width:45px;height:18px;background:#d49c8c;border-radius:50%;filter:blur(3px);opacity:1"></div><div class="a" style="left:16px;top:58px;width:36px;height:35px;background:#8a8a8c;border-radius:20%;filter:blur(3px);opacity:1"></div><div class="a" style="left:8px;top:60px;width:14px;height:30px;background:#2a2222;border-radius:50%;filter:blur(3px);opacity:1"></div><div class="a" style="left:-4px;top:55px;width:14px;height:40px;background:#c48c80;border-radius:50%;filter:blur(3px);opacity:1"></div></div>
<div class="a" style="left:897px;top:179px;width:156px;height:87px;background:#1f1f1f"></div>
<div class="a" style="left:950px;top:179px;width:49px;height:87px;background:#c6b6a4;overflow:hidden"><div class="a" style="left:8px;top:-4px;width:50px;height:12px;background:#9c9288;border-radius:10%;filter:blur(3px);opacity:1"></div><div class="a" style="left:-6px;top:0px;width:10px;height:90px;background:#b8a898;border-radius:10%;filter:blur(3px);opacity:1"></div><div class="a" style="left:13px;top:34px;width:32px;height:44px;background:#8a7662;border-radius:45%;filter:blur(3px);opacity:1"></div><div class="a" style="left:19px;top:40px;width:22px;height:36px;background:#b49484;border-radius:40%;filter:blur(2px);opacity:1"></div><div class="a" style="left:24px;top:62px;width:12px;height:5px;background:#5a4a40;border-radius:50%;filter:blur(1.5px);opacity:1"></div><div class="a" style="left:-5px;top:70px;width:60px;height:25px;background:#6e8c2a;border-radius:30%;filter:blur(3px);opacity:1"></div><div class="a" style="left:-6px;top:76px;width:14px;height:20px;background:#2e3a1a;border-radius:50%;filter:blur(3px);opacity:1"></div></div>
<div class="a" style="left:897px;top:268px;width:156px;height:88px;background:#1f1f1f"></div>
<div class="a" style="left:950px;top:268px;width:49px;height:88px;background:#a4a4a2;overflow:hidden"><div class="a" style="left:-5px;top:-4px;width:60px;height:8px;background:#c4c4c4;border-radius:10%;filter:blur(2px);opacity:1"></div><div class="a" style="left:-4px;top:4px;width:58px;height:20px;background:#dedede;border-radius:30%;filter:blur(3px);opacity:1"></div><div class="a" style="left:-4px;top:10px;width:14px;height:36px;background:#d8d8d8;border-radius:50%;filter:blur(3px);opacity:1"></div><div class="a" style="left:2px;top:22px;width:8px;height:20px;background:#555;border-radius:50%;filter:blur(3px);opacity:1"></div><div class="a" style="left:30px;top:18px;width:22px;height:50px;background:#b6b6b4;border-radius:50%;filter:blur(3px);opacity:1"></div><div class="a" style="left:13px;top:32px;width:26px;height:16px;background:#2c2624;border-radius:45%;filter:blur(2px);opacity:1"></div><div class="a" style="left:15px;top:38px;width:23px;height:34px;background:#c8a292;border-radius:40%;filter:blur(2px);opacity:1"></div><div class="a" style="left:18px;top:65px;width:18px;height:8px;background:#6a5a48;border-radius:50%;filter:blur(2px);opacity:1"></div><div class="a" style="left:-4px;top:70px;width:58px;height:24px;background:#e8e8e6;border-radius:20%;filter:blur(2px);opacity:1"></div></div>
<div class="a" style="left:897px;top:357px;width:156px;height:88px;background:#b4c3ca;overflow:hidden"><div class="a" style="left:-8px;top:0px;width:30px;height:95px;background:#3c433a;border-radius:20%;filter:blur(5px);opacity:1"></div><div class="a" style="left:24px;top:36px;width:26px;height:14px;background:#dde2e0;border-radius:50%;filter:blur(4px);opacity:1"></div><div class="a" style="left:40px;top:40px;width:20px;height:40px;background:#9a8474;border-radius:50%;filter:blur(5px);opacity:1"></div><div class="a" style="left:104px;top:10px;width:14px;height:65px;background:#555a54;border-radius:50%;filter:blur(5px);opacity:1"></div><div class="a" style="left:112px;top:-10px;width:60px;height:110px;background:#d2d6d4;border-radius:20%;filter:blur(6px);opacity:1"></div><div class="a" style="left:64px;top:22px;width:40px;height:24px;background:#222222;border-radius:50% 50% 20% 20%;filter:blur(3px);opacity:1"></div><div class="a" style="left:67px;top:36px;width:36px;height:46px;background:#c49686;border-radius:40%;filter:blur(3px);opacity:1"></div><div class="a" style="left:50px;top:70px;width:90px;height:30px;background:#b82a2a;border-radius:40% 40% 0 0;filter:blur(4px);opacity:1"></div><div class="a" style="left:66px;top:45px;width:36px;height:6px;background:#6a5048;border-radius:50%;filter:blur(2px);opacity:1"></div></div>
<div class="lbl" style="left:897px;top:73.70px">Ivette Coque</div>
<div class="lbl" style="left:897px;top:163.20px">Joselyn M</div>
<div class="lbl" style="left:897px;top:252.00px">Camila Quintanilla</div>
<div class="lbl" style="left:897px;top:341.70px">Guillermo Tapia</div>
<div class="lbl" style="left:897px;top:430.90px">Bryan Saltos</div>
<svg class="a" style="left:843px;top:333px" width="12" height="16" viewBox="0 0 12 16"><path d="M1.2 1.2 V11.6 L3.8 9.4 L5.6 13.2 L7.4 12.4 L5.7 8.7 L8.8 8.6 Z" fill="#fff" stroke="#111" stroke-width="1" stroke-linejoin="round"/></svg>
</body></html>
